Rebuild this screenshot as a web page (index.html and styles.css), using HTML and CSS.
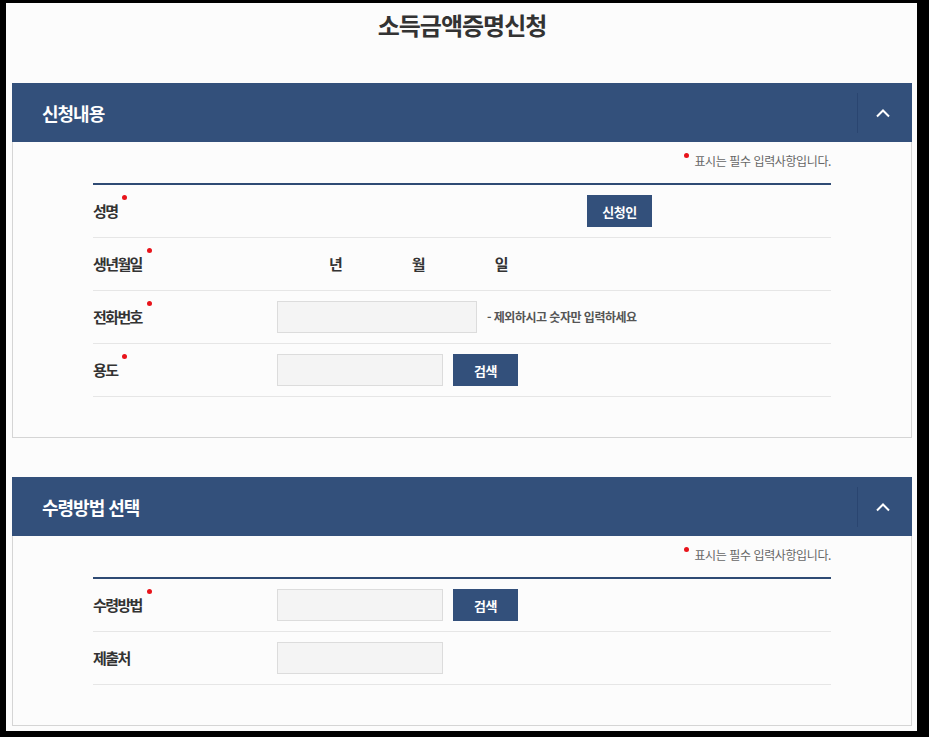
FILE: index.html
```html
<!DOCTYPE html>
<html lang="ko">
<head>
<meta charset="utf-8">
<title>소득금액증명신청</title>
<link rel="stylesheet" href="styles.css">
</head>
<body>
<div class="page">
  <h1 class="title">소득금액증명신청</h1>

  <section class="section">
    <div class="sec-head">
      <h2 class="sec-title">신청내용</h2>
      <button class="toggle" type="button" aria-label="접기">
        <svg width="16" height="10" viewBox="0 0 16 10"><polyline points="2,8.5 8,2.5 14,8.5" fill="none" stroke="#fff" stroke-width="2"/></svg>
      </button>
    </div>
    <div class="sec-body">
      <p class="note"><span class="dot note-dot"></span>표시는 필수 입력사항입니다.</p>
      <div class="form">
        <div class="row">
          <div class="label"><span class="req">성명</span></div>
          <div class="value">
            <span class="blank-300"></span>
            <button class="btn" type="button">신청인</button>
          </div>
        </div>
        <div class="row">
          <div class="label"><span class="req">생년월일</span></div>
          <div class="value date">
            <span class="date-part"><span class="date-sp"></span>년</span>
            <span class="date-part"><span class="date-sp"></span>월</span>
            <span class="date-part"><span class="date-sp"></span>일</span>
          </div>
        </div>
        <div class="row">
          <div class="label"><span class="req">전화번호</span></div>
          <div class="value">
            <input class="inp inp-200" type="text">
            <span class="hint">- 제외하시고 숫자만 입력하세요</span>
          </div>
        </div>
        <div class="row">
          <div class="label"><span class="req">용도</span></div>
          <div class="value">
            <input class="inp inp-166" type="text">
            <button class="btn" type="button">검색</button>
          </div>
        </div>
      </div>
    </div>
  </section>

  <section class="section">
    <div class="sec-head">
      <h2 class="sec-title">수령방법 선택</h2>
      <button class="toggle" type="button" aria-label="접기">
        <svg width="16" height="10" viewBox="0 0 16 10"><polyline points="2,8.5 8,2.5 14,8.5" fill="none" stroke="#fff" stroke-width="2"/></svg>
      </button>
    </div>
    <div class="sec-body">
      <p class="note"><span class="dot note-dot"></span>표시는 필수 입력사항입니다.</p>
      <div class="form">
        <div class="row">
          <div class="label"><span class="req">수령방법</span></div>
          <div class="value">
            <input class="inp inp-166" type="text">
            <button class="btn" type="button">검색</button>
          </div>
        </div>
        <div class="row">
          <div class="label"><span>제출처</span></div>
          <div class="value">
            <input class="inp inp-166" type="text">
          </div>
        </div>
      </div>
    </div>
  </section>
</div>
</body>
</html>
```

FILE: styles.css
```css
html, body {
  margin: 0;
  padding: 0;
  background: #000;
}
body {
  font-family: "Noto Sans CJK KR", "Noto Sans", sans-serif;
  color: #333;
}
.page {
  margin: 3px 12px 0 6px;
  height: 728px;
  box-sizing: border-box;
  padding: 5px 5px 0 6px;
  background: #fcfcfc;
  overflow: hidden;
}
.title {
  margin: 0 0 41px;
  font-size: 24px;
  line-height: 34px;
  font-weight: 700;
  letter-spacing: -1px;
  text-align: center;
  color: #333;
}
.section {
  margin-bottom: 39px;
}
.sec-head {
  display: flex;
  align-items: center;
  height: 59px;
  padding-left: 30px;
  background: #33507b;
}
.sec-title {
  margin: 0;
  font-size: 18px;
  line-height: 24px;
  font-weight: 700;
  letter-spacing: -1px;
  color: #fff;
}
.toggle {
  margin-left: auto;
  width: 55px;
  height: 40px;
  padding: 0 4px 0 0;
  border: 0;
  border-left: 1px solid #2a4570;
  background: transparent;
  display: flex;
  align-items: center;
  justify-content: center;
}
.sec-body {
  border: 1px solid #d5d5d5;
  border-top: 0;
  padding: 10px 80px 40px;
}
.note {
  margin: 0 0 13px;
  text-align: right;
  font-size: 12px;
  line-height: 18px;
  letter-spacing: -0.4px;
  color: #666;
}
.dot {
  display: inline-block;
  width: 5px;
  height: 5px;
  border-radius: 50%;
  background: #e8141b;
}
.note-dot {
  vertical-align: top;
  margin: 1px 5px 0 0;
}
.form {
  border-top: 2px solid #2f4b74;
}
.row {
  display: flex;
  align-items: center;
  height: 52px;
  border-bottom: 1px solid #e6e6e6;
}
.label {
  width: 184px;
  flex: none;
  font-size: 15px;
  line-height: 20px;
  font-weight: 700;
  letter-spacing: -1.6px;
  color: #333;
}
.req {
  position: relative;
}
.req::after {
  content: "";
  position: absolute;
  right: -10px;
  top: -5px;
  width: 5px;
  height: 5px;
  border-radius: 50%;
  background: #e8141b;
}
.value {
  display: flex;
  align-items: center;
}
.blank-300 {
  width: 300px;
  height: 32px;
  margin-right: 10px;
}
.btn {
  width: 65px;
  height: 32px;
  padding: 0;
  border: 0;
  background: #33507b;
  color: #fff;
  font-family: inherit;
  font-size: 13px;
  font-weight: 700;
  letter-spacing: -0.5px;
}
.inp {
  box-sizing: border-box;
  height: 32px;
  margin: 0 10px 0 0;
  border: 1px solid #dcdcdc;
  background: #f4f4f4;
  padding: 0 8px;
  font-family: inherit;
}
.inp-200 { width: 200px; }
.inp-166 { width: 166px; }
.hint {
  font-size: 12px;
  line-height: 18px;
  font-weight: 700;
  letter-spacing: -0.5px;
  color: #555;
}
.date-part {
  display: flex;
  align-items: center;
  margin-right: 17px;
  font-size: 15px;
  line-height: 20px;
  font-weight: 700;
  color: #333;
}
.date-sp {
  width: 52px;
}
```
